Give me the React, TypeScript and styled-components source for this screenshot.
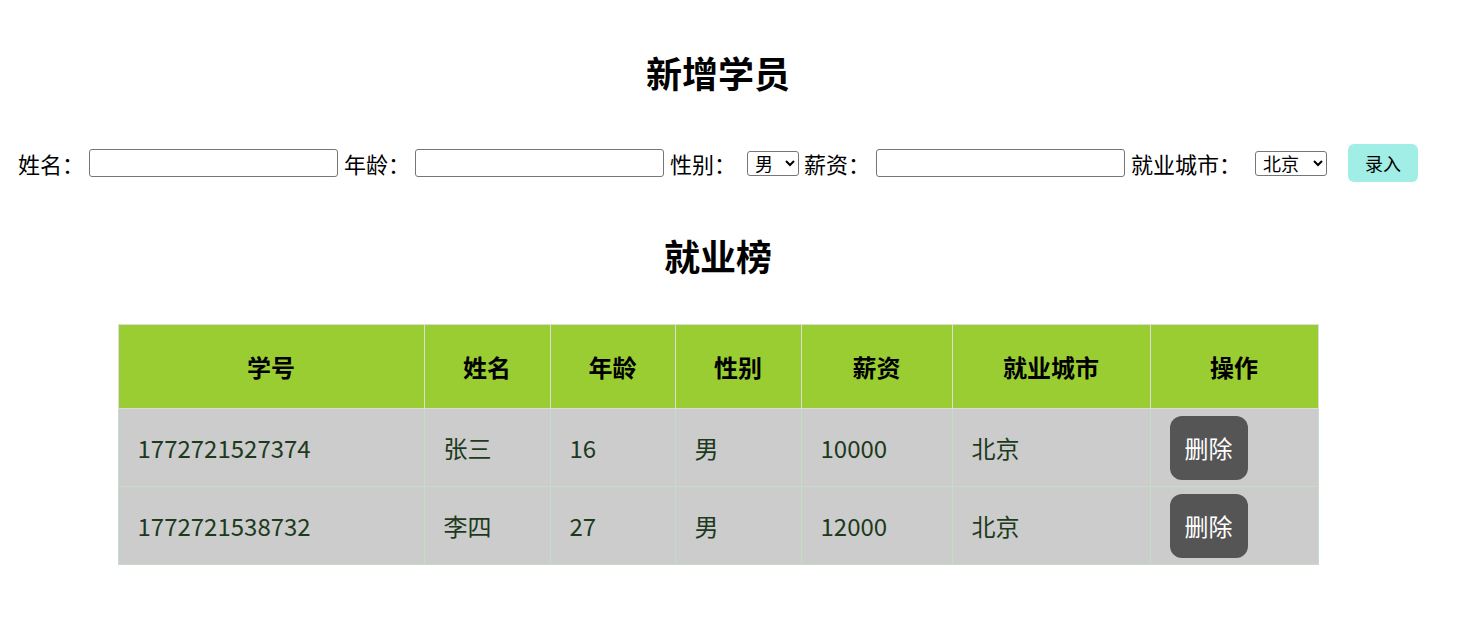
import React, { useState } from "react";
import styled, { createGlobalStyle } from "styled-components";

const GlobalStyle = createGlobalStyle`
  body {
    margin: 0;
    background: #fff;
    font-family: "Noto Sans CJK SC", "Noto Sans", sans-serif;
  }
`;

interface Student {
  id: string;
  name: string;
  age: number;
  gender: string;
  salary: number;
  city: string;
}

const initialStudents: Student[] = [
  { id: "1772721527374", name: "张三", age: 16, gender: "男", salary: 10000, city: "北京" },
  { id: "1772721538732", name: "李四", age: 27, gender: "男", salary: 12000, city: "北京" },
];

const columns = [
  { title: "学号", width: 306 },
  { title: "姓名", width: 126 },
  { title: "年龄", width: 125 },
  { title: "性别", width: 126 },
  { title: "薪资", width: 151 },
  { title: "就业城市", width: 198 },
  { title: "操作", width: 168 },
];

export default function App() {
  const [students, setStudents] = useState(initialStudents);

  return (
    <Page>
      <GlobalStyle />
      <Title>新增学员</Title>
      <Form>
        <Label>姓名：</Label>
        <TextInput type="text" />
        <Label>年龄：</Label>
        <TextInput type="text" />
        <Label $gap={11}>性别：</Label>
        <Select defaultValue="男" $width={52}>
          <option>男</option>
          <option>女</option>
        </Select>
        <Label $gap={6}>薪资：</Label>
        <TextInput type="text" />
        <Label $gap={14}>就业城市：</Label>
        <Select defaultValue="北京" $width={72}>
          <option>北京</option>
          <option>上海</option>
          <option>广州</option>
          <option>深圳</option>
        </Select>
        <SubmitButton type="button">录入</SubmitButton>
      </Form>
      <Title $top={48}>就业榜</Title>
      <Table>
        <colgroup>
          {columns.map((c) => (
            <col key={c.title} style={{ width: c.width }} />
          ))}
        </colgroup>
        <thead>
          <tr>
            {columns.map((c) => (
              <Th key={c.title}>{c.title}</Th>
            ))}
          </tr>
        </thead>
        <tbody>
          {students.map((s) => (
            <tr key={s.id}>
              <Td>{s.id}</Td>
              <Td>{s.name}</Td>
              <Td>{s.age}</Td>
              <Td>{s.gender}</Td>
              <Td>{s.salary}</Td>
              <Td>{s.city}</Td>
              <Td>
                <DeleteButton
                  type="button"
                  onClick={() => setStudents(students.filter((x) => x.id !== s.id))}
                >
                  删除
                </DeleteButton>
              </Td>
            </tr>
          ))}
        </tbody>
      </Table>
    </Page>
  );
}

const Page = styled.div`
  width: 1436px;
  padding-top: 47px;
  display: flex;
  flex-direction: column;
  align-items: center;
`;

const Title = styled.h3<{ $top?: number }>`
  margin: ${({ $top }) => $top ?? 0}px 0 0;
  font-size: 36px;
  line-height: 50px;
  font-weight: 700;
  color: #000;
`;

const Form = styled.div`
  align-self: stretch;
  margin-top: 47px;
  padding-left: 18px;
  display: flex;
  align-items: center;
  height: 38px;
`;

const Label = styled.span<{ $gap?: number }>`
  font-size: 22px;
  line-height: 30px;
  color: #000;
  margin-right: ${({ $gap }) => $gap ?? 5}px;
  white-space: nowrap;
`;

const TextInput = styled.input`
  box-sizing: border-box;
  width: 249px;
  height: 28px;
  margin: 0 6px 0 0;
  border: 1px solid #767676;
  border-radius: 3px;
  padding: 1px 2px;
`;

const Select = styled.select<{ $width: number }>`
  box-sizing: border-box;
  width: ${({ $width }) => $width}px;
  height: 25px;
  margin: 0 5px 0 0;
  padding: 2px 0 0 3px;
  font-family: "Liberation Sans", "Noto Sans CJK SC", sans-serif;
  font-size: 18px;
  color: #000;
  border: 1px solid #767676;
  border-radius: 3px;
  background: #fff;
`;

const SubmitButton = styled.button`
  width: 70px;
  height: 38px;
  margin-left: 16px;
  border: none;
  border-radius: 6px;
  background: #a0eee5;
  font-family: "Noto Sans CJK SC", sans-serif;
  font-size: 18px;
  color: #000;
  cursor: pointer;
`;

const Table = styled.table`
  margin-top: 44px;
  width: 1200px;
  border-collapse: collapse;
  table-layout: fixed;
`;

const Th = styled.th`
  height: 83px;
  padding: 0;
  background: #9acd32;
  border: 1px solid #dcdcdc;
  font-size: 24px;
  font-weight: 700;
  color: #000;
  text-align: center;
`;

const Td = styled.td`
  height: 77px;
  padding: 0 0 0 19px;
  background: #cccccc;
  border: 1px solid #c6dcc6;
  font-size: 24px;
  color: #1d3a1d;
  text-align: left;
`;

const DeleteButton = styled.button`
  width: 78px;
  height: 64px;
  border: none;
  border-radius: 12px;
  background: #555555;
  color: #fff;
  font-family: "Noto Sans CJK SC", sans-serif;
  font-size: 24px;
  cursor: pointer;
`;
